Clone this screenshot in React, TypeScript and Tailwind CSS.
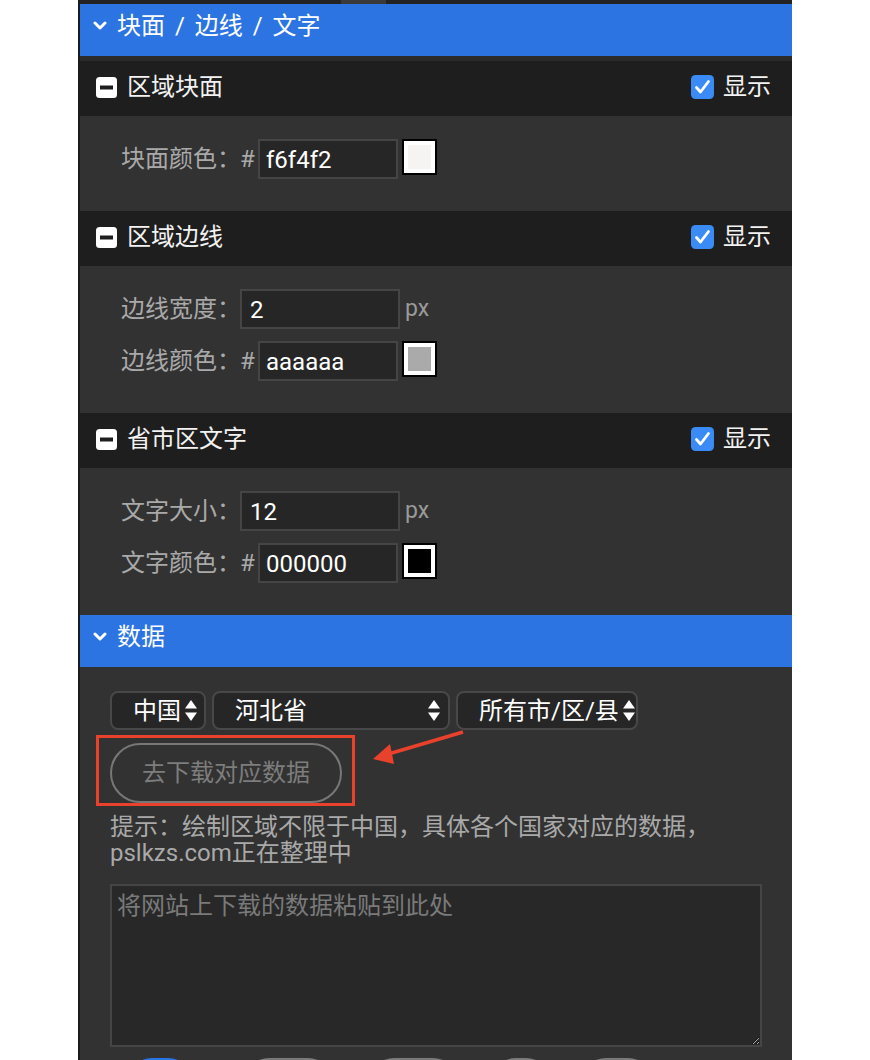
import React from "react";

const Chevron = () => (
  <svg width="14" height="10" viewBox="0 0 14 10" className="shrink-0">
    <polyline points="2,2 7,7 12,2" fill="none" stroke="#fff" strokeWidth="3" strokeLinecap="round" strokeLinejoin="round" />
  </svg>
);

const MinusBox = () => (
  <svg width="21" height="21" viewBox="0 0 21 21" className="shrink-0">
    <rect x="0" y="0" width="21" height="21" rx="3.5" fill="#fff" />
    <rect x="4" y="8.5" width="13" height="4" fill="#1e1e1e" />
  </svg>
);

const CheckBox = () => (
  <svg width="23" height="24" viewBox="0 0 23 24" className="shrink-0">
    <rect x="0" y="0" width="23" height="24" rx="4.5" fill="#3b8bf6" />
    <polyline points="5.5,12.5 9.5,17 17.5,6.5" fill="none" stroke="#fff" strokeWidth="2.8" strokeLinecap="round" strokeLinejoin="round" />
  </svg>
);

const UpDown = () => (
  <svg width="12" height="21" viewBox="0 0 12 21" className="shrink-0">
    <polygon points="6,0 12,8.5 0,8.5" fill="#fff" />
    <polygon points="0,12.5 12,12.5 6,21" fill="#fff" />
  </svg>
);

function BlueBar({ title }: { title: string }) {
  return (
    <div className="h-[52px] bg-[#2d74e3] flex items-center pl-[13px] pb-[8px] text-white text-[24px] leading-[24px] whitespace-nowrap [word-spacing:4px]">
      <Chevron />
      <span className="ml-[10px]">{title}</span>
    </div>
  );
}

function SectionHead({ title }: { title: string }) {
  return (
    <div className="h-[55px] bg-[#1e1e1e] flex items-center pl-[16px] pr-[21px] pb-[3px] text-[#f2f2f2] text-[24px] leading-[24px] whitespace-nowrap">
      <MinusBox />
      <span className="ml-[10px]">{title}</span>
      <div className="ml-auto flex items-center">
        <CheckBox />
        <span className="ml-[9px]">显示</span>
      </div>
    </div>
  );
}

function ColorRow({ label, value, swatch }: { label: string; value: string; swatch: string }) {
  return (
    <div className="flex items-start h-[40px] text-[24px] leading-[24px] whitespace-nowrap">
      <span className="w-[119px] shrink-0 h-[40px] flex items-center text-[#a9a9a9]">{label}：</span>
      <span className="w-[18px] shrink-0 h-[40px] flex items-center text-[#a9a9a9]">#</span>
      <div className="w-[140px] shrink-0 h-[40px] border-2 border-[#454545] bg-[#262626] pl-[6px] pt-[2px] flex items-center text-white">
        {value}
      </div>
      <div className="ml-[4px] shrink-0 w-[35px] h-[36px] border-2 border-black bg-white p-[4px]">
        <div className={`w-full h-full ${swatch}`} />
      </div>
    </div>
  );
}

function PxRow({ label, value }: { label: string; value: string }) {
  return (
    <div className="flex items-start h-[40px] text-[24px] leading-[24px] whitespace-nowrap">
      <span className="w-[119px] shrink-0 h-[40px] flex items-center text-[#a9a9a9]">{label}：</span>
      <div className="w-[160px] shrink-0 h-[40px] border-2 border-[#454545] bg-[#262626] pl-[8px] pt-[2px] flex items-center text-white">
        {value}
      </div>
      <span className="ml-[5px] h-[40px] flex items-center text-[#9a9a9a] text-[23px]">px</span>
    </div>
  );
}

function Select({ text, w }: { text: string; w: string }) {
  return (
    <div className={`${w} shrink-0 h-[39px] rounded-[8px] border-2 border-[#484848] bg-[#262626] flex items-center pl-[21px] pr-[8px] text-white whitespace-nowrap`}>
      <span>{text}</span>
      <span className="ml-auto pl-[4px]">
        <UpDown />
      </span>
    </div>
  );
}

export default function App() {
  return (
    <div className="w-[870px] h-[1060px] overflow-hidden bg-white font-['Roboto','Noto_Sans_CJK_SC',sans-serif]">
      <div className="ml-[78px] w-[714px] border-l-2 border-[#1b1b1b] bg-[#323232]">
        {/* top strip */}
        <div className="h-[4px] bg-[#232323] flex">
          <div className="w-[261px]" />
          <div className="w-[45px] bg-[#3a3a3a]" />
        </div>

        <BlueBar title="块面 / 边线 / 文字" />
        <div className="h-[5px] bg-[#2b2b2b]" />

        <SectionHead title="区域块面" />
        <div className="pl-[41px] pt-[23px] pb-[32px] flex flex-col gap-[12px]">
          <ColorRow label="块面颜色" value="f6f4f2" swatch="bg-[#f6f4f2]" />
        </div>

        <SectionHead title="区域边线" />
        <div className="pl-[41px] pt-[23px] pb-[32px] flex flex-col gap-[12px]">
          <PxRow label="边线宽度" value="2" />
          <ColorRow label="边线颜色" value="aaaaaa" swatch="bg-[#aaaaaa]" />
        </div>

        <SectionHead title="省市区文字" />
        <div className="pl-[41px] pt-[23px] pb-[32px] flex flex-col gap-[12px]">
          <PxRow label="文字大小" value="12" />
          <ColorRow label="文字颜色" value="000000" swatch="bg-black" />
        </div>

        <BlueBar title="数据" />
        <div className="relative px-[30px] pt-[24px] text-[24px] leading-[24px]">
          <div className="flex gap-[6px]">
            <Select text="中国" w="w-[96px]" />
            <Select text="河北省" w="w-[238px]" />
            <Select text="所有市/区/县" w="w-[182px]" />
          </div>

          <button className="mt-[13px] w-[232px] h-[60px] rounded-full border-2 border-[#777] text-[#7d7d7d] flex items-center justify-center whitespace-nowrap">
            去下载对应数据
          </button>

          <p className="mt-[11px] text-[#a9a9a9] leading-[26px]">
            提示：绘制区域不限于中国，具体各个国家对应的数据，
            <br />
            pslkzs.com正在整理中
          </p>

          <textarea
            className="mt-[18px] block w-full h-[163px] border-2 border-[#454545] bg-[#282828] pl-[5px] pt-[8px] text-white placeholder:text-[#7a7a7a] outline-none"
            placeholder="将网站上下载的数据粘贴到此处"
          />

          <div className="mt-[11px] flex">
            <div className="ml-[18px] w-[64px] h-[48px] rounded-full bg-[#2d74e3]" />
            <div className="ml-[53px] w-[87px] h-[48px] rounded-full bg-[#7a7a7a]" />
            <div className="ml-[38px] w-[87px] h-[48px] rounded-full bg-[#7a7a7a]" />
            <div className="ml-[35px] w-[58px] h-[48px] rounded-full bg-[#7a7a7a]" />
            <div className="ml-[32px] w-[70px] h-[48px] rounded-full bg-[#7a7a7a]" />
          </div>

          {/* annotation overlay */}
          <svg className="absolute left-0 top-0 pointer-events-none" width="714" height="160" viewBox="0 0 714 160">
            <rect x="17.5" y="69.5" width="256" height="68" fill="none" stroke="#e8412c" strokeWidth="3" />
            <line x1="383" y1="65" x2="305" y2="88" stroke="#e8412c" strokeWidth="3.5" />
            <polygon points="293,92 310,77 314,97" fill="#e8412c" />
          </svg>
        </div>
      </div>
    </div>
  );
}
